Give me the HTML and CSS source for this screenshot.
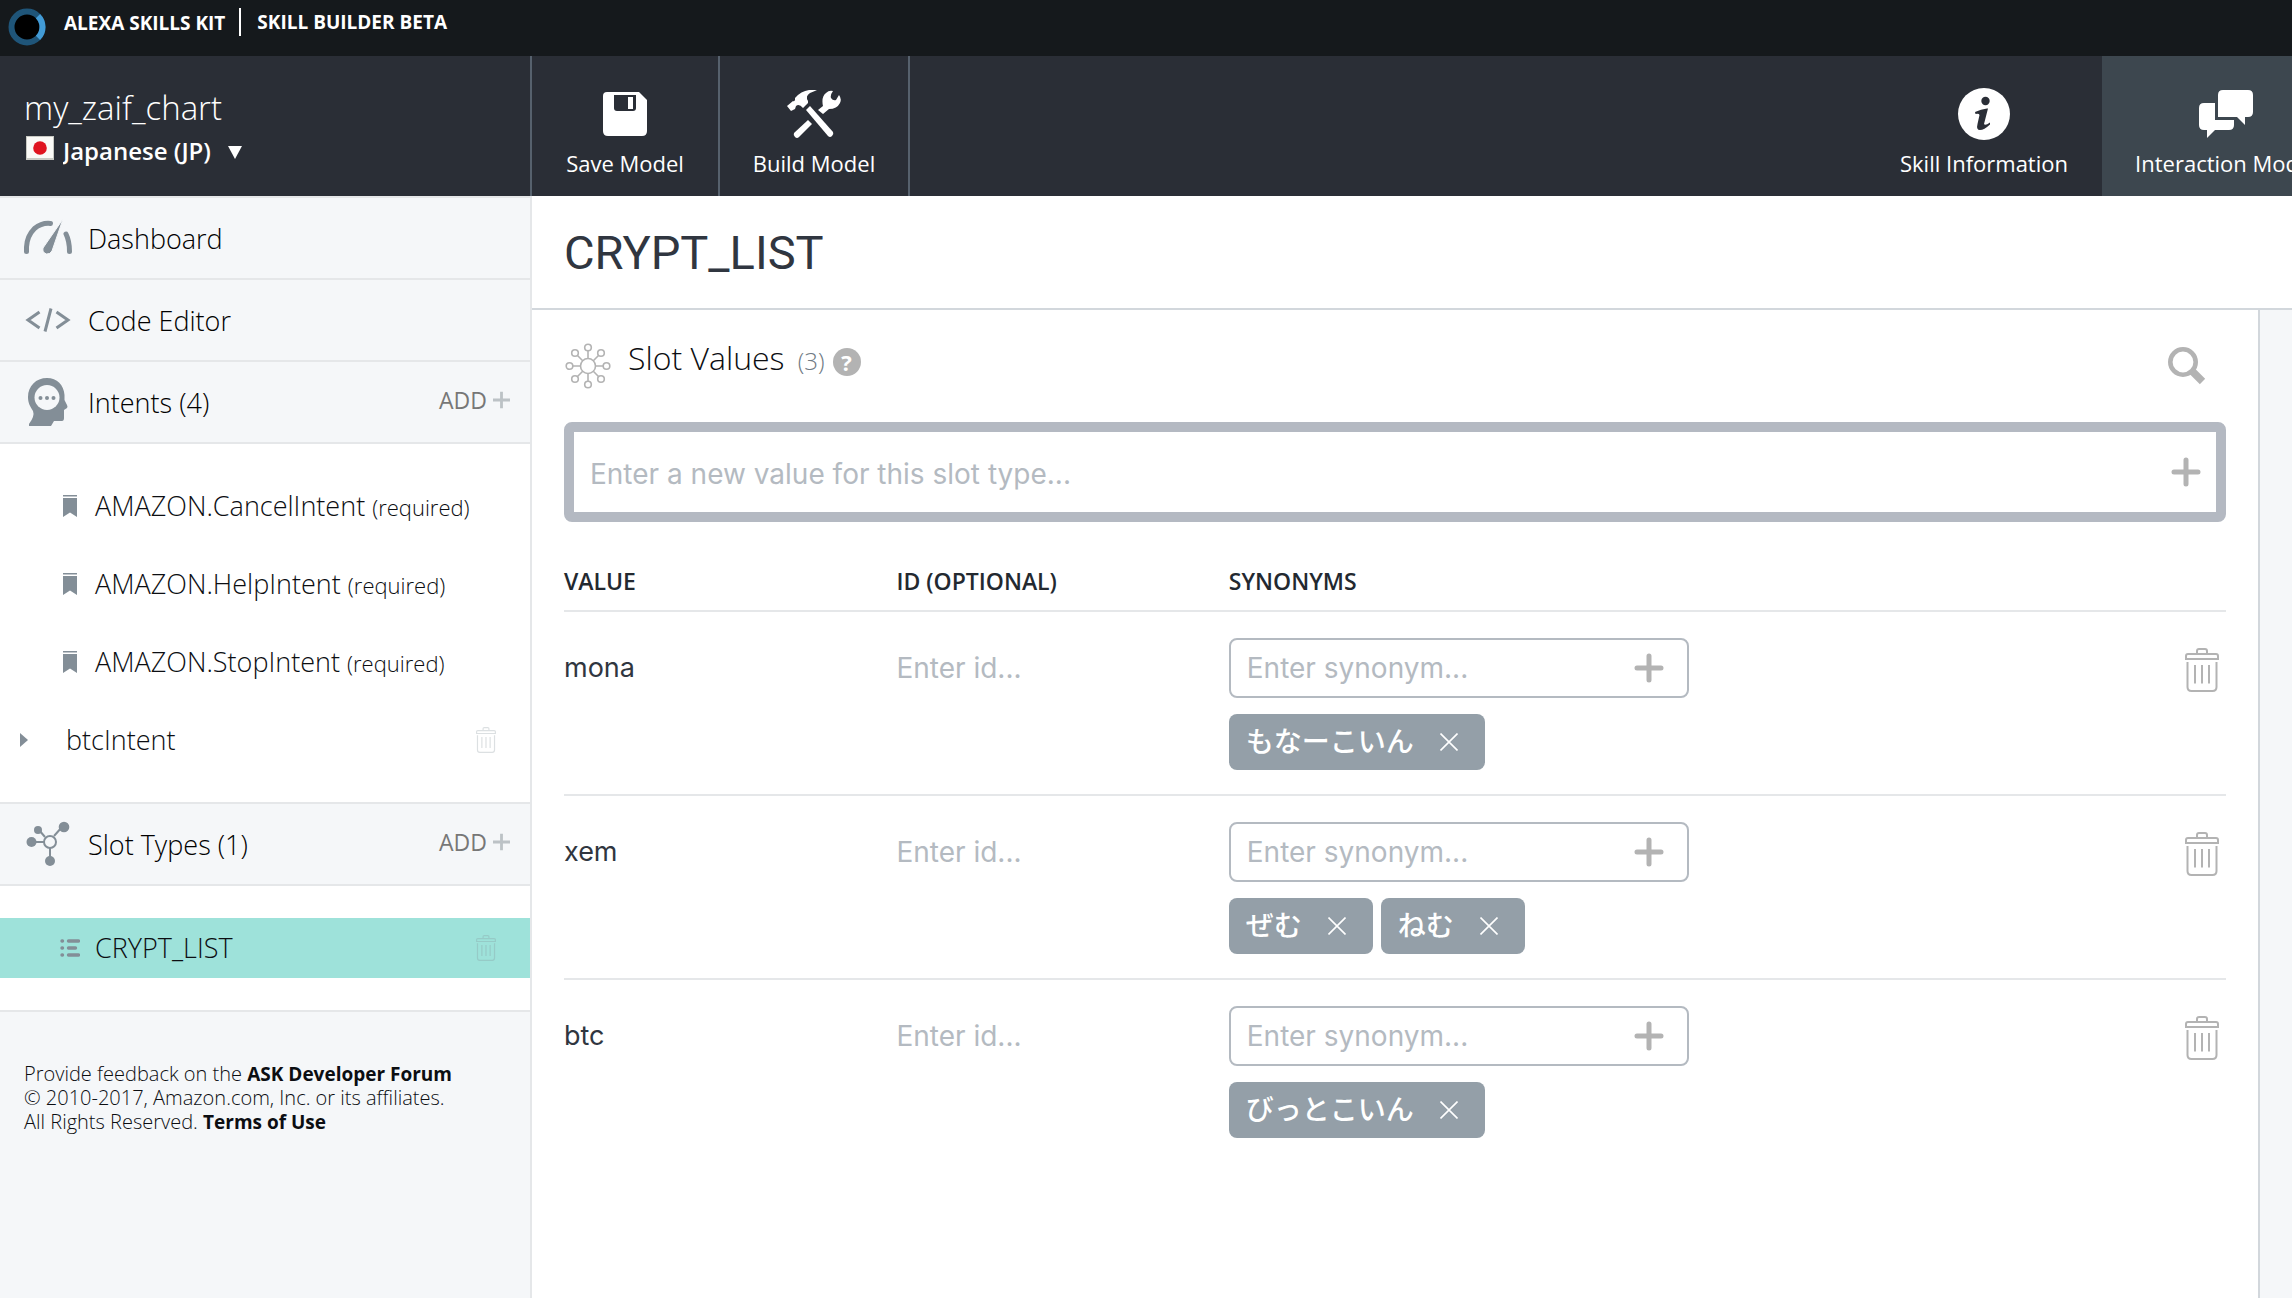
FILE: index.html
```html
<!DOCTYPE html>
<html lang="en">
<head>
<meta charset="utf-8">
<meta name="viewport" content="width=device-width, initial-scale=1">
<title>Alexa Skills Kit | Skill Builder Beta</title>
<link rel="stylesheet" href="styles.css">
</head>
<body>
<svg class="sprite" aria-hidden="true">
  <symbol id="i-trash" viewBox="0 0 34 44">
    <g fill="none" stroke="currentColor" stroke-width="2">
      <path d="M12 5V3q0-2 2-2h6q2 0 2 2v2"/>
      <path d="M1 11V8q0-2 2-2h28q2 0 2 2v3z"/>
      <path d="M2.500 14V39q0 4 4 4h21q4 0 4-4V14"/>
      <path d="M10 17V35.500M17 17V35.500M24 17V35.500"/>
    </g>
  </symbol>
  <symbol id="i-plus" viewBox="0 0 30 30">
    <path d="M15 3V27M3 15H27" fill="none" stroke="currentColor" stroke-width="5" stroke-linecap="round"/>
  </symbol>
  <symbol id="i-add" viewBox="0 0 18 18">
    <path d="M9 0V18M0 9H18" fill="none" stroke="currentColor" stroke-width="3"/>
  </symbol>
  <symbol id="i-close" viewBox="0 0 18 18">
    <path d="M0.500 0.500L17.500 17.500M17.500 0.500L0.500 17.500" fill="none" stroke="currentColor" stroke-width="1.600"/>
  </symbol>
  <symbol id="i-bookmark" viewBox="0 0 14 22">
    <path d="M0 0H14V1.600H0zM0 3H14V22L7 17.500L0 22z" fill="currentColor"/>
  </symbol>
</svg>

<div class="topbar">
  <svg class="logo" viewBox="0 0 38 38" aria-hidden="true">
    <circle cx="19" cy="19" r="15.500" fill="#000" stroke="#1f5579" stroke-width="6"/>
    <path d="M29.960 8.040A15.500 15.500 0 0 1 29.960 29.960" fill="none" stroke="#429bd6" stroke-width="6"/>
  </svg>
  <span class="topbar-kit">ALEXA SKILLS KIT</span>
  <span class="topbar-app">SKILL BUILDER BETA</span>
</div>

<header class="header">
  <div class="skill">
    <div class="skill-name">my_zaif_chart</div>
    <div class="skill-lang">
      <svg class="flag" viewBox="0 0 28 24" aria-hidden="true"><rect width="28" height="24" fill="#c9cac4"/><rect x="1" y="1" width="26" height="21" fill="#fbfaf7"/><circle cx="14" cy="12" r="6.800" fill="#e0141f"/></svg>
      <select class="lang-select" aria-label="Language"><option>Japanese (JP)</option></select>
      <svg class="caret" viewBox="0 0 14 13" aria-hidden="true"><path d="M0 0H14L7 13z" fill="#fff"/></svg>
    </div>
  </div>
  <button class="tool" type="button">
    <svg class="tool-icon" viewBox="0 0 54 52" aria-hidden="true">
      <path d="M9 4H41L49 12V43Q49 48 44 48H10Q5 48 5 43V8Q5 4 9 4z" fill="#fff"/>
      <path d="M16 7H38V20Q38 23 35 23H19Q16 23 16 20z" fill="#2a2e36"/>
      <path d="M30 9H35V21H30z" fill="#fff"/>
    </svg>
    <span>Save Model</span>
  </button>
  <button class="tool" type="button">
    <svg class="tool-icon" viewBox="0 0 54 52" aria-hidden="true">
      <g fill="#fff">
        <path d="M0 18L6 13Q7 14 8 12V10Q14 3 22 2L30 2Q28 3 23 5Q18 8 21 13L21 15L16 20Q12 15 9 18L8 21L4 23z"/>
        <path d="M19 22L23 18L46 44Q47 46 45 48Q43 50 41 48z"/>
        <path d="M7 45L21 32L25 36L12 49Q10 51 8 49Q6 47 7 45z"/>
        <path d="M31 22L36 18Q34 9 39 5Q42 2 46 3Q43 7 44 10Q46 13 49 12L52 7Q55 11 53 15Q50 21 42 21L36 26z"/>
      </g>
    </svg>
    <span>Build Model</span>
  </button>
  <nav class="sections">
    <a class="section" href="#info">
      <svg class="tool-icon" viewBox="0 0 54 52" aria-hidden="true">
        <circle cx="27" cy="26" r="26" fill="#fff"/>
        <circle cx="28.500" cy="13" r="4.200" fill="#2a2e36"/>
        <path d="M18 24Q24 21 30 20.500H31L27 36Q28 38 33 34.500L33 36.500Q27 42 23 42Q19 42 20.500 36L22.500 27Q22 25 18.500 26z" fill="#2a2e36"/>
      </svg>
      <span>Skill Information</span>
    </a>
    <a class="section section-on" href="#model">
      <svg class="tool-icon" viewBox="0 0 54 52" aria-hidden="true">
        <path d="M24 2H49Q54 2 54 7V24Q54 29 49 29H46V37L38 29H19V7Q19 2 24 2z" fill="#fff"/>
        <path d="M5 15H16V32H35V37Q35 42 30 42H16L8 50V42H5Q0 42 0 37V20Q0 15 5 15z" fill="#fff"/>
      </svg>
      <span>Interaction Model</span>
    </a>
  </nav>
</header>

<div class="page">
  <aside class="sidebar">
    <div class="group">
      <svg class="group-icon" viewBox="0 0 48 48" aria-hidden="true">
        <g fill="none" stroke="#838e97" stroke-width="5" stroke-linecap="round">
          <path d="M2.500 37.500V33Q3 22 10.500 14.500Q18 8.500 26.500 9.500"/>
          <path d="M42 20Q45.500 27 45.500 37.500"/>
        </g>
        <path d="M39 5L28 37Q26 40.500 22.500 40Q18 38.500 19 34z" fill="#838e97" stroke="#f5f7f9" stroke-width="1"/>
      </svg>
      <a href="#dashboard">Dashboard</a>
    </div>
    <div class="group">
      <svg class="group-icon" viewBox="0 0 48 48" aria-hidden="true">
        <path d="M15.500 16L4 24L15.500 32M32.500 16L44 24L32.500 32M27 12.500L21 35.500" fill="none" stroke="#838e97" stroke-width="3"/>
      </svg>
      <a href="#code">Code Editor</a>
    </div>
    <div class="group">
      <svg class="group-icon" viewBox="0 0 48 48" aria-hidden="true">
        <path d="M23 0C12 0 4 8 4 19C4 25 6 28 9 33Q11 38 5 46V48H27L30 43H38Q40 43 40 40V32L43 30Q44 29 43 27L40.500 22V17C40 7 33 0 23 0z" fill="#838e97"/>
        <circle cx="23" cy="19.500" r="12.500" fill="#f5f7f9"/>
        <g fill="#838e97"><circle cx="16.500" cy="20" r="2"/><circle cx="23" cy="20" r="2"/><circle cx="29.500" cy="20" r="2"/></g>
      </svg>
      <span>Intents (4)</span>
      <button class="add" type="button">ADD <svg viewBox="0 0 18 18" aria-hidden="true"><use href="#i-add"/></svg></button>
    </div>
    <ul class="items">
      <li class="item"><svg class="bookmark" aria-hidden="true"><use href="#i-bookmark"/></svg><a href="#cancel">AMAZON.CancelIntent <small>(required)</small></a></li>
      <li class="item"><svg class="bookmark" aria-hidden="true"><use href="#i-bookmark"/></svg><a href="#help">AMAZON.HelpIntent <small>(required)</small></a></li>
      <li class="item"><svg class="bookmark" aria-hidden="true"><use href="#i-bookmark"/></svg><a href="#stop">AMAZON.StopIntent <small>(required)</small></a></li>
      <li class="item item-parent">
        <svg class="expand" viewBox="0 0 8 14" aria-hidden="true"><path d="M0 0L8 7L0 14z" fill="#838e97"/></svg>
        <a href="#btc">btcIntent</a>
        <button class="remove" type="button" aria-label="Delete btcIntent"><svg aria-hidden="true"><use href="#i-trash"/></svg></button>
      </li>
    </ul>
    <div class="group">
      <svg class="group-icon" viewBox="0 0 48 48" aria-hidden="true">
        <g stroke="#838e97" stroke-width="2" fill="none"><path d="M8 22H20M15 10L21 17M38 7L30 16M26 28V38"/><circle cx="26" cy="22" r="6"/></g>
        <g fill="#838e97"><circle cx="7.500" cy="22" r="5"/><circle cx="14" cy="10" r="4"/><circle cx="40" cy="7" r="5.300"/><circle cx="26" cy="41" r="5"/></g>
      </svg>
      <span>Slot Types (1)</span>
      <button class="add" type="button">ADD <svg viewBox="0 0 18 18" aria-hidden="true"><use href="#i-add"/></svg></button>
    </div>
    <ul class="items">
      <li class="item item-on">
        <svg class="list-icon" viewBox="0 0 20 18" aria-hidden="true"><path d="M2 2H2.500M2 9H2.500M2 16H2.500M8.500 2H18.500M8.500 9H15.500M8.500 16H18.500" fill="none" stroke="#838e97" stroke-width="3.400" stroke-linecap="round"/></svg>
        <a href="#crypt">CRYPT_LIST</a>
        <button class="remove" type="button" aria-label="Delete CRYPT_LIST"><svg aria-hidden="true"><use href="#i-trash"/></svg></button>
      </li>
    </ul>
    <footer class="legal">
      Provide feedback on the <a href="#forum">ASK Developer Forum</a><br>
      © 2010-2017, Amazon.com, Inc. or its affiliates.<br>
      All Rights Reserved. <a href="#terms">Terms of Use</a>
    </footer>
  </aside>

  <main class="main">
    <h1>CRYPT_LIST</h1>
    <section class="panel">
      <div class="panel-head">
        <svg class="hub" viewBox="0 0 46 46" aria-hidden="true">
          <g fill="none" stroke="#b3b3b3" stroke-width="1.600">
            <circle cx="23" cy="23" r="7.500"/>
            <path d="M23 15.500V8M23 30.500V38M15.500 23H8M30.500 23H38M17.700 17.700L12.500 12.500M28.300 17.700L33.500 12.500M17.700 28.300L12.500 33.500M28.300 28.300L33.500 33.500"/>
            <circle cx="23" cy="4.500" r="3.300"/><circle cx="23" cy="41.500" r="3.300"/><circle cx="4.500" cy="23" r="3.300"/><circle cx="41.500" cy="23" r="3.300"/>
            <circle cx="10" cy="10" r="3.300"/><circle cx="36" cy="10" r="3.300"/><circle cx="10" cy="36" r="3.300"/><circle cx="36" cy="36" r="3.300"/>
          </g>
        </svg>
        <h2>Slot Values <span class="count">(3)</span></h2>
        <button class="help" type="button" aria-label="Help">?</button>
        <button class="search" type="button" aria-label="Search">
          <svg viewBox="0 0 38 38" aria-hidden="true"><circle cx="15" cy="15" r="12.700" fill="none" stroke="#b3b3b3" stroke-width="4.600"/><path d="M24 24L34.500 34.500" stroke="#b3b3b3" stroke-width="7.500"/></svg>
        </button>
      </div>

      <div class="new-value">
        <input type="text" aria-label="New slot value" placeholder="Enter a new value for this slot type...">
        <button class="plus" type="button" aria-label="Add value"><svg aria-hidden="true"><use href="#i-plus"/></svg></button>
      </div>

      <table class="values">
        <thead>
          <tr><th class="col-name" scope="col">VALUE</th><th class="col-name" scope="col">ID (OPTIONAL)</th><th scope="col" colspan="2">SYNONYMS</th></tr>
        </thead>
        <tbody>
          <tr>
            <td><div class="value">mona</div></td>
            <td><input class="id-input" type="text" aria-label="ID for mona" placeholder="Enter id..."></td>
            <td>
              <div class="synonym"><input type="text" aria-label="Synonym for mona" placeholder="Enter synonym..."><button class="plus" type="button" aria-label="Add synonym"><svg aria-hidden="true"><use href="#i-plus"/></svg></button></div>
              <div class="tags"><span class="tag" lang="ja">もなーこいん<button type="button" aria-label="Remove"><svg aria-hidden="true"><use href="#i-close"/></svg></button></span></div>
            </td>
            <td class="col-delete"><button class="delete" type="button" aria-label="Delete mona"><svg aria-hidden="true"><use href="#i-trash"/></svg></button></td>
          </tr>
          <tr>
            <td><div class="value">xem</div></td>
            <td><input class="id-input" type="text" aria-label="ID for xem" placeholder="Enter id..."></td>
            <td>
              <div class="synonym"><input type="text" aria-label="Synonym for xem" placeholder="Enter synonym..."><button class="plus" type="button" aria-label="Add synonym"><svg aria-hidden="true"><use href="#i-plus"/></svg></button></div>
              <div class="tags"><span class="tag" lang="ja">ぜむ<button type="button" aria-label="Remove"><svg aria-hidden="true"><use href="#i-close"/></svg></button></span><span class="tag" lang="ja">ねむ<button type="button" aria-label="Remove"><svg aria-hidden="true"><use href="#i-close"/></svg></button></span></div>
            </td>
            <td class="col-delete"><button class="delete" type="button" aria-label="Delete xem"><svg aria-hidden="true"><use href="#i-trash"/></svg></button></td>
          </tr>
          <tr>
            <td><div class="value">btc</div></td>
            <td><input class="id-input" type="text" aria-label="ID for btc" placeholder="Enter id..."></td>
            <td>
              <div class="synonym"><input type="text" aria-label="Synonym for btc" placeholder="Enter synonym..."><button class="plus" type="button" aria-label="Add synonym"><svg aria-hidden="true"><use href="#i-plus"/></svg></button></div>
              <div class="tags"><span class="tag" lang="ja">びっとこいん<button type="button" aria-label="Remove"><svg aria-hidden="true"><use href="#i-close"/></svg></button></span></div>
            </td>
            <td class="col-delete"><button class="delete" type="button" aria-label="Delete btc"><svg aria-hidden="true"><use href="#i-trash"/></svg></button></td>
          </tr>
        </tbody>
      </table>
    </section>
  </main>
</div>
</body>
</html>
```
FILE: styles.css
```css
:root {
  --ui: "Open Sans", "Noto Sans", sans-serif;
  --text: "Inter", "Noto Sans CJK JP", sans-serif;
  --dark: #2a2e36;
  --ink: #0c0e12;
  --slate: #838e97;
  --muted: #b4bac1;
  --icon: #b3b3b3;
  --line: #e5e7e9;
  --pale: #f5f7f9;
}

* { box-sizing: border-box; }

body {
  display: flex;
  flex-direction: column;
  min-height: 100vh;
  margin: 0;
  background: #fff;
  color: var(--ink);
  font-family: var(--ui);
  overflow-x: hidden;
}

a { color: inherit; text-decoration: none; }
svg { display: block; flex: none; }
button, input, select { margin: 0; padding: 0; border: 0; background: none; font: inherit; color: inherit; }
button { cursor: pointer; }
.sprite { display: none; }

/* Top bar */
.topbar {
  display: flex;
  align-items: flex-start;
  height: 56px;
  padding: 8px;
  background: #15191c;
  color: #fff;
  font-size: 19px;
  font-weight: 700;
  line-height: 30px;
}
.logo { width: 38px; height: 38px; margin-right: 18px; }
.topbar-kit { padding-right: 14px; }
.topbar-app { padding-left: 16px; border-left: 2px solid #fff; line-height: 28px; }

/* Header */
.header {
  display: flex;
  height: 140px;
  background: var(--dark);
  color: #fff;
  overflow: hidden;
}
.skill {
  flex: none;
  width: 532px;
  padding: 30px 24px;
  border-right: 2px solid #56616d;
}
.skill-name { font-size: 33px; font-weight: 300; line-height: 44px; }
.skill-lang { display: flex; align-items: center; gap: 9px; height: 40px; }
.flag { width: 28px; height: 24px; margin-left: 2px; margin-bottom: 4px; }
.lang-select { appearance: none; font-size: 24px; font-weight: 600; height: 40px; }
.caret { width: 14px; height: 13px; margin: 4px 0 0 8px; }
.tool, .section {
  display: flex;
  flex-direction: column;
  flex: none;
  align-items: center;
  padding: 32px 32px 0;
  font-size: 22px;
  line-height: 30px;
}
.tool { width: 188px; border-right: 2px solid #56616d; }
.tool + .tool { width: 190px; }
.tool-icon { width: 54px; height: 52px; margin-bottom: 8px; }
.sections { display: flex; margin-left: auto; margin-right: -58px; }
.section { width: 236px; }
.section-on { width: 248px; background: #3d474f; }

/* Page */
.page { display: flex; flex: 1; }

/* Sidebar */
.sidebar {
  flex: none;
  width: 532px;
  border-top: 2px solid var(--line);
  border-right: 2px solid var(--line);
  background: var(--pale);
  font-size: 27px;
  font-weight: 300;
}
.group {
  display: flex;
  align-items: center;
  gap: 16px;
  height: 82px;
  padding: 0 20px 0 24px;
  border-bottom: 2px solid var(--line);
}
.group a, .group span { color: #000; }
.group-icon { width: 48px; height: 48px; }
.add {
  display: flex;
  align-items: center;
  gap: 6px;
  margin-left: auto;
  padding-bottom: 4px;
  color: #777;
  font-size: 23px;
  font-weight: 500;
}
.add svg { width: 17px; height: 18px; color: #bcc2c6; }
.items {
  display: flex;
  flex-direction: column;
  gap: 18px;
  margin: 0;
  padding: 32px 0;
  border-bottom: 2px solid var(--line);
  background: #fff;
  list-style: none;
}
.item { display: flex; align-items: center; height: 60px; padding: 0 34px 0 60px; }
.item a { padding-bottom: 2px; }
.item small { font-size: 22px; }
.bookmark { width: 14px; height: 22px; margin: 0 18px 0 3px; color: var(--slate); }
.item-parent { padding-left: 20px; }
.expand { width: 8px; height: 14px; margin-right: 38px; }
.item-on { background: #9ee2da; }
.list-icon { width: 20px; height: 18px; margin-right: 15px; }
.remove { margin-left: auto; color: rgba(131, 142, 151, 0.28); }
.remove svg { width: 20px; height: 26px; }
.legal { padding: 50px 24px; font-size: 20px; line-height: 24px; }
.legal a { font-size: 19px; font-weight: 700; }

/* Main */
.main { display: flex; flex: 1; flex-direction: column; min-width: 0; background: var(--pale); }
h1 {
  margin: 0;
  padding: 2px 32px 0;
  border-bottom: 2px solid #d2d7dc;
  background: #fff;
  color: #303640;
  font: 400 47px/110px Roboto, sans-serif;
}
.panel {
  flex: 1;
  margin-right: 32px;
  padding: 0 32px;
  border-right: 2px solid #d2d7dc;
  background: #fff;
}
.panel-head { display: flex; align-items: center; height: 112px; }
.hub { width: 46px; height: 46px; margin-left: 1px; }
h2 { margin: 0 0 14px 17px; font-size: 32px; font-weight: 300; line-height: 40px; }
.count { margin-left: 5px; color: #6f7a84; font-size: 24px; }
.help {
  width: 28px;
  height: 28px;
  margin: 0 0 8px 8px;
  border-radius: 50%;
  background: var(--icon);
  color: #fff;
  font: 700 22px/28px var(--ui);
}
.search { margin: 0 20px 0 auto; }
.search svg { width: 38px; height: 38px; }

.plus { color: var(--icon); }
.plus svg { width: 30px; height: 30px; }
input { flex: 1; min-width: 0; outline: 0; font: 400 28px/40px var(--text); }
input::placeholder { color: var(--muted); opacity: 1; }
.new-value {
  display: flex;
  align-items: center;
  height: 100px;
  padding: 0 15px 0 16px;
  border: 10px solid #b4b9c2;
  border-radius: 8px;
}
.new-value input { padding-top: 4px; }

.values { width: 100%; table-layout: fixed; border-spacing: 0; }
th {
  padding: 46px 0 16px;
  border-bottom: 2px solid var(--line);
  color: #232930;
  font-size: 23px;
  font-weight: 600;
  line-height: 26px;
  text-align: left;
}
.col-name { width: 20%; }
td { padding: 26px 0 24px; border-bottom: 2px solid var(--line); vertical-align: top; }
tbody tr:last-child td { border-bottom: 0; }
.value, .id-input { height: 60px; line-height: 60px; }
.value { color: #303640; font-family: var(--text); font-size: 27px; }
.id-input { display: block; width: 100%; }
.synonym {
  display: flex;
  align-items: center;
  width: 460px;
  max-width: 100%;
  height: 60px;
  padding: 0 23px 0 16px;
  border: 2px solid #b4bac1;
  border-radius: 8px;
}
.tags { display: flex; gap: 8px; margin-top: 16px; }
.tag {
  display: flex;
  height: 56px;
  padding: 0 27px 0 17px;
  border-radius: 8px;
  background: #949fa8;
  color: #fff;
  font: 500 28px/52px "Noto Sans CJK JP", sans-serif;
}
.tag button { margin-left: 26px; }
.tag svg { width: 18px; height: 18px; }
.col-delete { padding-top: 36px; }
.delete { display: block; margin: 0 7px 0 auto; color: var(--icon); }
.delete svg { width: 34px; height: 44px; }
```
